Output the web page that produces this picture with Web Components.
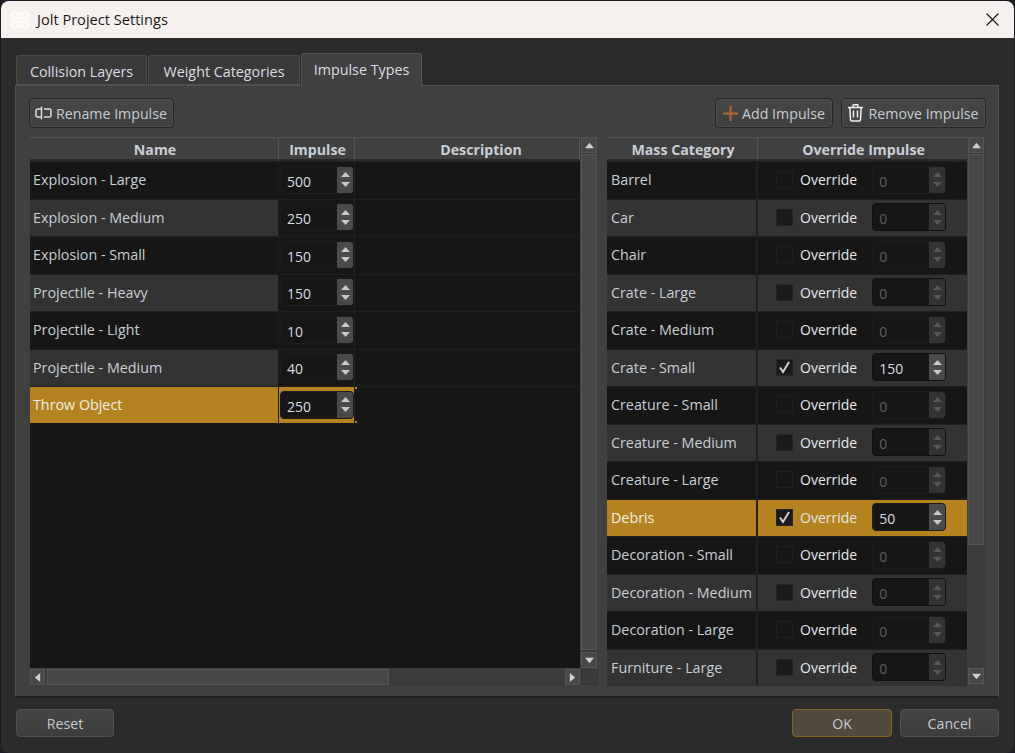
<!DOCTYPE html>
<html><head><meta charset="utf-8">
<style>
html,body{margin:0;padding:0;background:#1b1c24;width:1015px;height:753px;overflow:hidden;font-family:"Open Sans","Noto Sans",sans-serif;}
</style></head>
<body>
<settings-window>
  <tab-bar slot="tabs">
    <tab-item style="width:131px">Collision Layers</tab-item>
    <tab-item style="width:152px">Weight Categories</tab-item>
    <tab-item active style="width:121px">Impulse Types</tab-item>
  </tab-bar>
  <tool-bar slot="toolbar">
    <ui-button style="width:145px;padding-right:1px">
      <svg slot="icon" style="margin-right:2px" width="17" height="14" viewBox="0 0 17 14" fill="none" stroke="#dcdcdc" stroke-width="1.5"><path d="M6.5 3H2.5Q1 3 1 4.5V9.5Q1 11 2.5 11H6.5"/><path d="M6.5 .5V13.5"/><path d="M9 3H14.5Q16 3 16 4.5V9.5Q16 11 14.5 11H9"/></svg>
      Rename Impulse
    </ui-button>
    <span style="flex:1"></span>
    <ui-button style="width:118px">
      <svg slot="icon" style="margin-right:2px" width="15" height="15" viewBox="0 0 16 16" fill="none" stroke="#b8692a" stroke-width="2"><path d="M8 0V16M0 8H16"/></svg>
      Add Impulse
    </ui-button>
    <ui-button style="width:145px;margin-left:8px;padding-right:2px">
      <svg slot="icon" style="margin-right:3px" width="17" height="18" viewBox="0 0 16 18" fill="none" stroke="#f0f0f0" stroke-width="1.5"><path d="M.5 3.5H15.5"/><path d="M5.5 3V1.5Q5.5 .8 6.2 .8H9.8Q10.5 .8 10.5 1.5V3"/><path d="M2.3 3.5 3 15.5Q3.1 17 4.6 17H11.4Q12.9 17 13 15.5L13.7 3.5"/><path d="M6 6.5V13.5M10 6.5V13.5"/></svg>
      Remove Impulse
    </ui-button>
  </tool-bar>
  <impulse-table slot="left">
    <impulse-row name="Explosion - Large" value="500"></impulse-row>
    <impulse-row name="Explosion - Medium" value="250" alt></impulse-row>
    <impulse-row name="Explosion - Small" value="150"></impulse-row>
    <impulse-row name="Projectile - Heavy" value="150" alt></impulse-row>
    <impulse-row name="Projectile - Light" value="10"></impulse-row>
    <impulse-row name="Projectile - Medium" value="40" alt></impulse-row>
    <impulse-row name="Throw Object" value="250" selected></impulse-row>
  </impulse-table>
  <mass-table slot="right">
    <mass-row name="Barrel"></mass-row>
    <mass-row name="Car" alt></mass-row>
    <mass-row name="Chair"></mass-row>
    <mass-row name="Crate - Large" alt></mass-row>
    <mass-row name="Crate - Medium"></mass-row>
    <mass-row name="Crate - Small" alt checked value="150"></mass-row>
    <mass-row name="Creature - Small"></mass-row>
    <mass-row name="Creature - Medium" alt></mass-row>
    <mass-row name="Creature - Large"></mass-row>
    <mass-row name="Debris" selected checked value="50"></mass-row>
    <mass-row name="Decoration - Small"></mass-row>
    <mass-row name="Decoration - Medium" alt></mass-row>
    <mass-row name="Decoration - Large"></mass-row>
    <mass-row name="Furniture - Large" alt></mass-row>
  </mass-table>
  <ui-button slot="reset" style="width:98px">Reset</ui-button>
  <ui-button slot="ok" primary style="width:100px">OK</ui-button>
  <ui-button slot="cancel" style="width:99px;margin-left:8px">Cancel</ui-button>
</settings-window>

<script>
function def(name, css, html){
  customElements.define(name, class extends HTMLElement{
    connectedCallback(){
      if(this.shadowRoot) return;
      const s=this.attachShadow({mode:'open'});
      s.innerHTML='<style>'+css+'</style>'+html;
    }
  });
}
const FONT='"Open Sans","Noto Sans",sans-serif';

def('settings-window',`
:host{display:flex;flex-direction:column;box-sizing:border-box;margin:1px 1px 0 1px;width:1013px;height:752px;background:#2b2b2b;border-radius:8px;overflow:hidden;font-family:${FONT};font-size:14px;color:#d6dbe0}
.title{flex:none;height:37px;background:#f6f0ee;display:flex;align-items:center;color:#1a1a1a;font-size:14.6px}
.title span{padding-bottom:1px}
.logo{margin-left:8px;margin-right:6px;flex:none}
.close{margin-left:auto;margin-right:15px;flex:none}
.content{flex:1;display:flex;flex-direction:column;padding:15px 14px 0 14px;min-height:0}
.pane{box-sizing:border-box;height:613px;background:#404040;border:1px solid #505050;border-bottom:2px solid #1f1f1f;padding:12px 12px 10px 13px;display:flex;flex-direction:column;margin-right:1px}
.tables{flex:1;display:flex;gap:9px;min-height:0;margin-top:9px;margin-left:1px}
.foot{display:flex;margin:11px 1px 0 1px;height:28px}
.sp{flex:1}
`,`
<div class="title">
<svg class="logo" width="22" height="22" viewBox="0 0 22 22" fill="none" stroke="#fffdfc" stroke-width="1.8"><ellipse cx="11" cy="11" rx="10" ry="5" transform="rotate(45 11 11)"/><ellipse cx="11" cy="11" rx="10" ry="5" transform="rotate(-45 11 11)"/><circle cx="11" cy="11" r="2.4"/></svg>
<span>Jolt Project Settings</span>
<svg class="close" width="13" height="13" viewBox="0 0 13 13" stroke="#111" stroke-width="1.1"><path d="M.5 .5 12.5 12.5M12.5 .5 .5 12.5"/></svg>
</div>
<div class="content">
<slot name="tabs"></slot>
<div class="pane">
<slot name="toolbar"></slot>
<div class="tables"><slot name="left"></slot><slot name="right"></slot></div>
</div>
<div class="foot"><slot name="reset"></slot><span class="sp"></span><slot name="ok"></slot><slot name="cancel"></slot></div>
</div>`);

def('tab-bar',`:host{display:flex;align-items:flex-end;height:32px;gap:1px;padding-left:1px;flex:none}`,`<slot></slot>`);

customElements.define('tab-item',class extends HTMLElement{connectedCallback(){
  const a=this.hasAttribute('active');
  this.attachShadow({mode:'open'}).innerHTML=`<style>
  :host{display:flex;align-items:center;justify-content:center;box-sizing:border-box;height:${a?33:30}px;padding:${a?'0 0 2px':'2px 0 0'};background:${a?'#404040':'#393939'};border:1px solid ${a?'#555':'#4a4a4a'};border-bottom:${a?'none':'1px solid #505050'};border-radius:3px 3px 0 0;font-size:14.3px;color:#d9dee3;white-space:nowrap;${a?'margin-bottom:-1px;position:relative;':''}}
  </style><slot></slot>`;
}});

def('tool-bar',`:host{display:flex;height:30px;flex:none}`,`<slot></slot>`);

customElements.define('ui-button',class extends HTMLElement{connectedCallback(){
  const p=this.hasAttribute('primary');
  this.attachShadow({mode:'open'}).innerHTML=`<style>
  :host{display:flex;align-items:center;justify-content:center;gap:2px;box-sizing:border-box;height:30px;border:1px solid ${p?'#87641f':'#262626'};border-radius:4px;background:${p?'#50493c':'linear-gradient(#474747,#3f3f3f)'};box-shadow:${p?'none':'inset 0 0 0 1px #4b4b4b'};font-size:14.2px;color:#c6ccd2;white-space:nowrap}
  :host([slot]){height:28px}
  :host([slot]:not([primary])){border-color:#505050;box-shadow:none;background:linear-gradient(#454545,#3d3d3d)}
  ::slotted(svg){flex:none}
  </style><slot name="icon"></slot><span><slot></slot></span>`;
}});

customElements.define('spin-box',class extends HTMLElement{connectedCallback(){
  const d=this.hasAttribute('disabled');
  this.attachShadow({mode:'open'}).innerHTML=`<style>
  :host{display:flex;box-sizing:border-box;height:28px;width:74px;background:#161616;border:1px solid ${this.hasAttribute('strong')?'#101010':'#1c1c1c'};border-radius:4px;overflow:hidden;color:${d?'#5e5e5e':'#d6dbe0'};font-size:14px;flex:none}
  .v{flex:1;padding-left:6px;line-height:28px;padding-top:1px}
  .b{width:16px;background:${d?'#333':'#4a4a4a'};display:flex;flex-direction:column;align-items:center;justify-content:center;gap:5px}
  </style><span class="v">${this.getAttribute('value')}</span><span class="b">
  <svg width="9" height="5" viewBox="0 0 10 6" preserveAspectRatio="none"><path d="M5 0 10 6H0Z" fill="${d?'#565656':'#c8c8c8'}"/></svg>
  <svg width="9" height="5" viewBox="0 0 10 6" preserveAspectRatio="none"><path d="M5 6 0 0H10Z" fill="${d?'#565656':'#c8c8c8'}"/></svg></span>`;
}});

customElements.define('check-box',class extends HTMLElement{connectedCallback(){
  const c=this.hasAttribute('checked');
  this.attachShadow({mode:'open'}).innerHTML=`<style>
  :host{display:flex;align-items:center;gap:7px;font-size:14px;color:#e6e8ea;flex:none}
  .b{box-sizing:border-box;width:17px;height:17px;background:${this.hasAttribute('strong')||c?'#1a1a1a':'#161616'};border:1px solid ${this.hasAttribute('strong')||c?'#252525':'#1f1f1f'};display:flex;align-items:center;justify-content:center}
  .t{padding-bottom:.5px}
  </style><span class="b">${c?'<svg width="13" height="13" viewBox="0 0 13 13" fill="none" stroke="#d2d2d2" stroke-width="2"><path d="M2 6.5 5 11 11 1"/></svg>':''}</span><span class="t">Override</span>`;
}});

customElements.define('scroll-bar',class extends HTMLElement{connectedCallback(){
  const h=this.hasAttribute('horizontal');
  const t=this.getAttribute('thumb');
  const tri=d=>`<svg width="9" height="9" viewBox="0 0 10 10"><path d="${{u:'M5 2 10 8H0Z',d:'M5 8 0 2H10Z',l:'M2 5 8 0V10Z',r:'M8 5 2 0V10Z'}[d]}" fill="#d0d0d0"/></svg>`;
  this.attachShadow({mode:'open'}).innerHTML=`<style>
  :host{display:flex;flex-direction:${h?'row':'column'};box-sizing:border-box;${h?'height:17px':'width:17px'};flex:none;background:#3b3b3b}
  .btn{flex:none;width:${h?'15px':'16px'};height:16px;background:#484848;border:1px solid #555;box-sizing:border-box;display:flex;align-items:center;justify-content:center}
  .track{flex:1;display:flex;flex-direction:${h?'row':'column'};${h?'padding:0 2px':'padding:1px 0'};min-width:0;min-height:0}
  .thumb{box-sizing:border-box;background:#484848;border:1px solid #555;${h?`width:${t}px;height:16px`:`height:${t}px;width:16px`}}
  </style><span class="btn">${tri(h?'l':'u')}</span><span class="track"><span class="thumb"></span></span><span class="btn">${tri(h?'r':'d')}</span>`;
}});

const hcell=`display:flex;align-items:center;justify-content:center;box-sizing:border-box;background:#404040;border-top:1px solid #555;border-bottom:2px solid #2a2a2a;border-right:1px solid #555;font-weight:700;font-size:14.2px;color:#c9cfd6;height:24px;padding:1px 0 0 2px;white-space:nowrap`;

def('impulse-table',`
:host{display:flex;width:568px;height:549px;flex:none}
.m{width:550px;display:flex;flex-direction:column}
.h{display:flex;flex:none}
.h span{${hcell}}
.rows{height:507px;background:#161616;flex:none;overflow:hidden}
.hs{margin-top:1px;background:#3b3b3b}
.side{display:flex;flex-direction:column;margin-left:1px}
.corner{flex:1;box-sizing:border-box;width:17px;margin-top:1px;margin-bottom:1px;background:#3a3a3a;border:1px solid #353535}
`,`<div class="m"><div class="h"><span style="width:249px">Name</span><span style="width:76px">Impulse</span><span style="width:225px;padding-left:28px">Description</span></div>
<div class="rows"><slot></slot></div>
<scroll-bar class="hs" horizontal thumb="342"></scroll-bar></div>
<div class="side"><scroll-bar thumb="496" style="height:531px"></scroll-bar><span class="corner"></span></div>`);

customElements.define('impulse-row',class extends HTMLElement{connectedCallback(){
  const a=this.hasAttribute('alt'),s=this.hasAttribute('selected');
  const bg=s?'#b4831f':a?'#333':'#161616';
  this.attachShadow({mode:'open'}).innerHTML=`<style>
  :host{display:flex;height:${s?36.5:37.5}px;box-sizing:border-box;border-top:1px solid #202020;font-size:14.3px;color:${s?'#f2efe8':'#c8ced4'}}
  .n{width:249px;background:${bg};display:flex;align-items:center;padding:0 0 ${s?0:1}px 3px;box-sizing:border-box;border-right:1px solid #1c1c1c}
  .i{width:76px;background:${s?bg:'#161616'};display:flex;align-items:center;padding:0 0 ${s?0:1}px 1px;box-sizing:border-box;border-right:1px solid #202020;font-size:14px}
  .d{width:225px;background:#161616;position:relative}
  ${s?'.d::before,.d::after{content:"";position:absolute;left:0;width:2px;height:2px;background:#b4831f}.d::before{top:0}.d::after{bottom:0}':''}
  </style><span class="n">${this.getAttribute('name')}</span><span class="i"><spin-box value="${this.getAttribute('value')}"></spin-box></span><span class="d"></span>`;
}});

def('mass-table',`
:host{display:flex;width:378px;height:549px;flex:none}
.m{width:360px;display:flex;flex-direction:column;overflow:hidden}
.h{display:flex;flex:none}
.h span{${hcell}}
.rows{flex:1;overflow:hidden;background:#161616}
`,`<div class="m"><div class="h"><span style="width:151px">Mass Category</span><span style="width:209px;border-right:0">Override Impulse</span></div>
<div class="rows"><slot></slot></div></div>
<scroll-bar thumb="391" style="height:547px;margin-left:1px"></scroll-bar>`);

customElements.define('mass-row',class extends HTMLElement{connectedCallback(){
  const a=this.hasAttribute('alt'),s=this.hasAttribute('selected'),c=this.hasAttribute('checked');
  const bg=s?'#b4831f':a?'#333':'#161616';
  const st=a?'strong':'';
  this.attachShadow({mode:'open'}).innerHTML=`<style>
  :host{display:flex;height:37.5px;box-sizing:border-box;border-top:1px solid #202020;font-size:14.3px;color:${s?'#f2efe8':'#c8ced4'};white-space:nowrap}
  .n{width:151px;background:${bg};display:flex;align-items:center;padding:0 0 1px 4px;box-sizing:border-box;border-right:2px solid #202020}
  .o{flex:1;background:${bg};display:flex;align-items:center;padding:0 0 1px 18px;box-sizing:border-box}
  spin-box{margin-left:15px}
  </style><span class="n">${this.getAttribute('name')}</span><span class="o"><check-box ${c?'checked':''} ${st}></check-box><spin-box value="${this.getAttribute('value')||0}" ${c?'':'disabled'} ${st}></spin-box></span>`;
}});
</script>
</body></html>
